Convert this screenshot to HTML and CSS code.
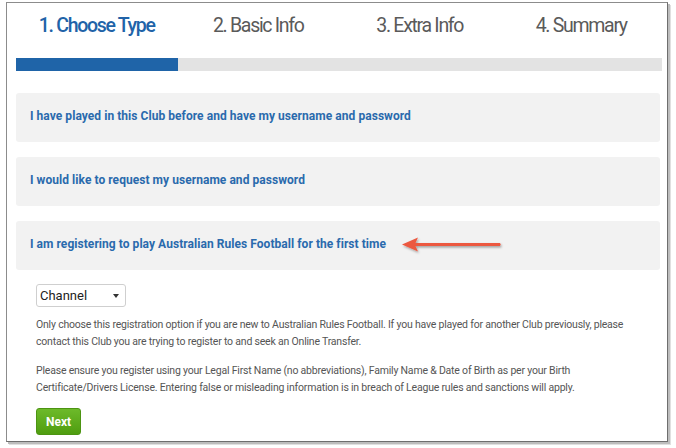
FILE: index.html
```html
<!DOCTYPE html>
<html>
<head>
<meta charset="utf-8">
<link rel="stylesheet" href="styles.css">
</head>
<body>
<div class="frame">
  <div class="steps">
    <div class="step active">1. Choose Type</div>
    <div class="step">2. Basic Info</div>
    <div class="step">3. Extra Info</div>
    <div class="step">4. Summary</div>
  </div>
  <div class="progress"><div class="fill" style="width:25%"></div></div>
  <div class="options">
    <div class="option">I have played in this Club before and have my username and password</div>
    <div class="option">I would like to request my username and password</div>
    <div class="option option-arrow">I am registering to play Australian Rules Football for the first time
      <svg class="arrow" width="104" height="20" viewBox="0 0 104 20">
        <defs>
          <filter id="sh" x="-10%" y="-40%" width="130%" height="200%">
            <feDropShadow dx="1" dy="1.5" stdDeviation="1" flood-color="#000" flood-opacity="0.35"/>
          </filter>
        </defs>
        <g filter="url(#sh)">
          <path d="M2 9.5 L18 2.5 L15.5 8 L100 8 Q101.5 9.5 100 11 L15.5 11 L18 16.5 Z" fill="#ec5840"/>
        </g>
      </svg>
    </div>
  </div>
  <div class="details">
    <div class="select"><span>Channel</span><span class="caret"></span></div>
    <p>Only choose this registration option if you are new to Australian Rules Football. If you have played for another Club previously, please contact this Club you are trying to register to and seek an Online Transfer.</p>
    <p>Please ensure you register using your Legal First Name (no abbreviations), Family Name &amp; Date of Birth as per your Birth Certificate/Drivers License. Entering false or misleading information is in breach of League rules and sanctions will apply.</p>
    <button class="next">Next</button>
  </div>
</div>
</body>
</html>
```

FILE: styles.css
```css
html, body {
  margin: 0;
  padding: 0;
  background: #ffffff;
  width: 676px;
  height: 448px;
  overflow: hidden;
}

body {
  font-family: Roboto, "Liberation Sans", sans-serif;
}

.frame {
  box-sizing: border-box;
  margin: 2px 0 0 6px;
  width: 662px;
  height: 440px;
  border: 1px solid #8c8c8c;
  border-right-color: #6e6e6e;
  border-bottom-color: #6e6e6e;
  box-shadow: 2px 2px 0 #bdbdbd, 3px 3px 0 #e0e0e0;
  padding: 0 5px 0 9px;
  background: #fff;
}

.steps {
  display: grid;
  grid-template-columns: repeat(4, 1fr);
  height: 48px;
  align-items: center;
}

.step {
  text-align: center;
  font-size: 19.5px;
  color: #5a5a5a;
  letter-spacing: -1.3px;
  padding-bottom: 4px;
}

.step.active {
  color: #2163a8;
  font-weight: 500;
}

.progress {
  margin-top: 7px;
  height: 13px;
  background: #e3e3e3;
}

.progress .fill {
  height: 100%;
  background: #1f64a8;
}

.options {
  display: flex;
  flex-direction: column;
  gap: 15px;
  margin-top: 22px;
  padding-right: 2px;
}

.option {
  box-sizing: border-box;
  height: 49px;
  background: #f2f2f2;
  border-radius: 3px;
  display: flex;
  align-items: center;
  padding-left: 14px;
  padding-bottom: 3px;
  font-size: 12px;
  font-weight: 700;
  color: #2a6aad;
  letter-spacing: 0.05px;
}

.arrow {
  margin-left: 14px;
  margin-top: 2px;
}

.details {
  padding-left: 20px;
  padding-top: 14px;
}

.select {
  box-sizing: border-box;
  width: 90px;
  height: 23px;
  border: 1px solid #cfcfcf;
  border-radius: 3px;
  display: flex;
  align-items: center;
  justify-content: space-between;
  padding: 0 6px 0 3px;
  font-size: 13px;
  color: #222;
}

.caret {
  width: 0;
  height: 0;
  border-left: 3px solid transparent;
  border-right: 3px solid transparent;
  border-top: 4px solid #333;
}

.details p {
  margin: 9px 0 0 0;
  font-size: 10.5px;
  line-height: 17px;
  color: #555;
  letter-spacing: -0.2px;
  padding-right: 8px;
}

.details p + p {
  margin-top: 12px;
}

.next {
  margin-top: 12px;
  width: 45px;
  height: 27px;
  border: 1px solid #4c9412;
  border-radius: 3px;
  background: linear-gradient(#6dba2a, #4f9d10);
  color: #fff;
  font-family: inherit;
  font-weight: 700;
  font-size: 12px;
  padding: 0;
}
```
